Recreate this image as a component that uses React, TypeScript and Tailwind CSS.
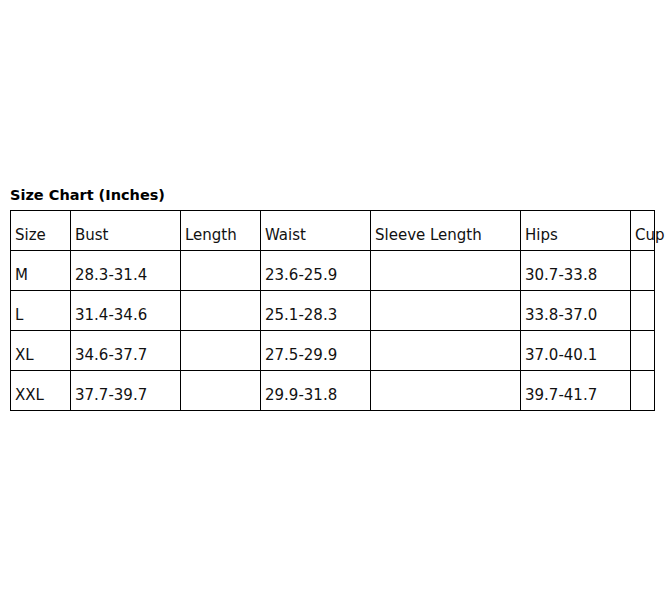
import React from "react";

const widths = ["w-[60px]", "w-[110px]", "w-[80px]", "w-[110px]", "w-[150px]", "w-[110px]", "w-[24px]"];

const rows: string[][] = [
  ["Size", "Bust", "Length", "Waist", "Sleeve Length", "Hips", "Cup"],
  ["M", "28.3-31.4", "", "23.6-25.9", "", "30.7-33.8", ""],
  ["L", "31.4-34.6", "", "25.1-28.3", "", "33.8-37.0", ""],
  ["XL", "34.6-37.7", "", "27.5-29.9", "", "37.0-40.1", ""],
  ["XXL", "37.7-39.7", "", "29.9-31.8", "", "39.7-41.7", ""],
];

export default function App() {
  return (
    <div
      className="w-[670px] h-[600px] bg-white text-black pt-[187px] pl-[10px] overflow-hidden"
      style={{ fontFamily: '"DejaVu Sans", Verdana, sans-serif' }}
    >
      <div className="h-[23px] text-[14.5px] leading-[17px] font-bold">Size Chart (Inches)</div>
      <div className="flex flex-col w-max border-l border-t border-black">
        {rows.map((r, i) => (
          <div key={i} className="flex">
            {r.map((c, j) => (
              <div
                key={j}
                className={`${widths[j]} h-[40px] shrink-0 border-r border-b border-black pl-[4px] pt-[16px] text-[15px] leading-[17px] whitespace-nowrap text-[#111]`}
              >
                {c}
              </div>
            ))}
          </div>
        ))}
      </div>
    </div>
  );
}
